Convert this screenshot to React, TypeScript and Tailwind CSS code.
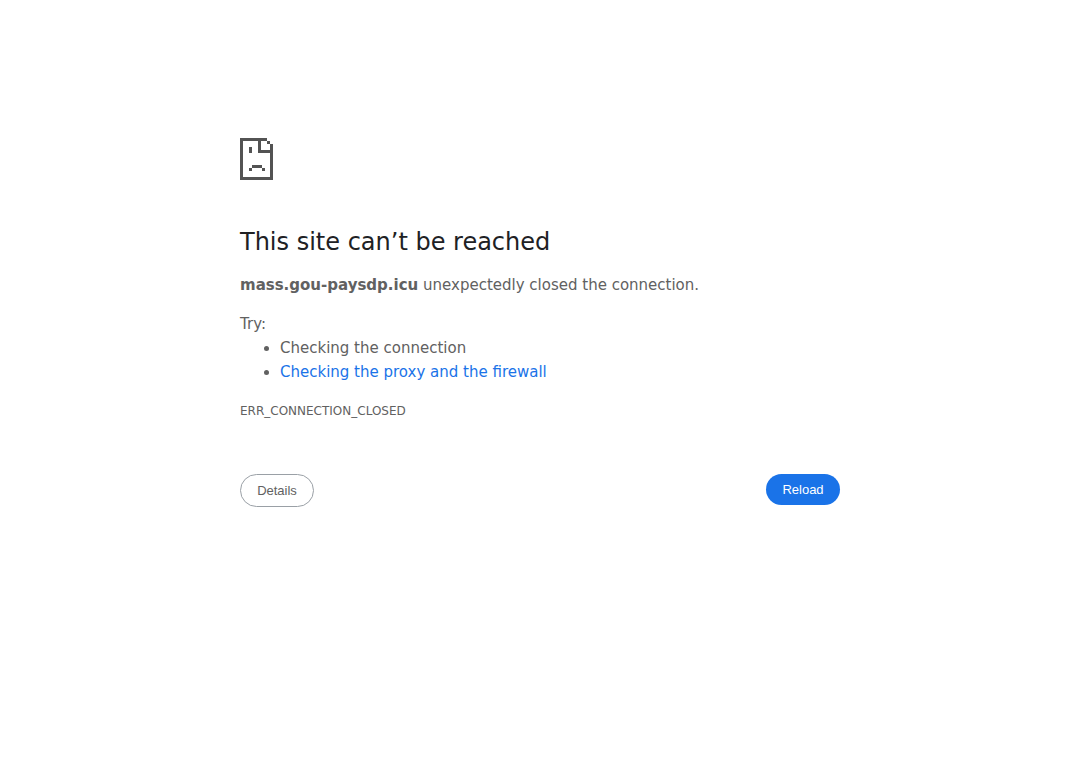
import React from "react";

const suggestions = [
  { label: "Checking the connection" },
  { label: "Checking the proxy and the firewall", href: "#buttons" },
];

// Sad page, drawn on a grid of single pixels.
const SadPageIcon: React.FC = () => {
  return (
    <svg
      className="block w-[33px] h-[42px] fill-[#535353]"
      viewBox="0 0 33 42"
      shapeRendering="crispEdges"
      aria-hidden="true"
    >
      <path d="M0 0h27v3H3v36h27V15H18V3h3v9h9V6h3v36H0z" />
      <path d="M27 3h3v3h-3zM9 9h3v6H9zM12 27h10v3H12zM9 30h3v3H9zM22 30h3v3h-3z" />
    </svg>
  );
};

export const App: React.FC = () => {
  return (
    <div className="min-h-screen bg-white text-[#616161] text-[15px] leading-6 font-['DejaVu_Sans',sans-serif]">
      <main className="w-full max-w-[600px] mx-auto pt-[138px]">
        <SadPageIcon />
        <h1 className="mt-12 mb-4 text-2xl leading-[29px] font-normal text-[#202124]">
          This site can’t be reached
        </h1>
        <p>
          <strong className="font-bold">mass.gou-paysdp.icu</strong>{" "}
          unexpectedly closed the connection.
        </p>
        <div className="mt-[15px]">
          <p>Try:</p>
          <ul className="list-disc pl-10">
            {suggestions.map(({ label, href }) => (
              <li key={label}>
                {href ? (
                  <a href={href} className="text-[#1a73e8]">
                    {label}
                  </a>
                ) : (
                  label
                )}
              </li>
            ))}
          </ul>
        </div>
        <div className="mt-[15px] text-xs leading-6">ERR_CONNECTION_CLOSED</div>
        <div
          id="buttons"
          className="mt-[51px] flex justify-between items-start text-[13px] leading-[15px] font-['Liberation_Sans',sans-serif]"
        >
          <button
            type="button"
            className="min-w-[74px] px-4 py-2 rounded-full border border-[#9aa0a6] bg-white"
          >
            Details
          </button>
          <button
            type="button"
            className="min-w-[74px] px-4 py-2 rounded-full bg-[#1a73e8] text-white"
            onClick={() => window.location.reload()}
          >
            Reload
          </button>
        </div>
      </main>
    </div>
  );
};

export default App;
